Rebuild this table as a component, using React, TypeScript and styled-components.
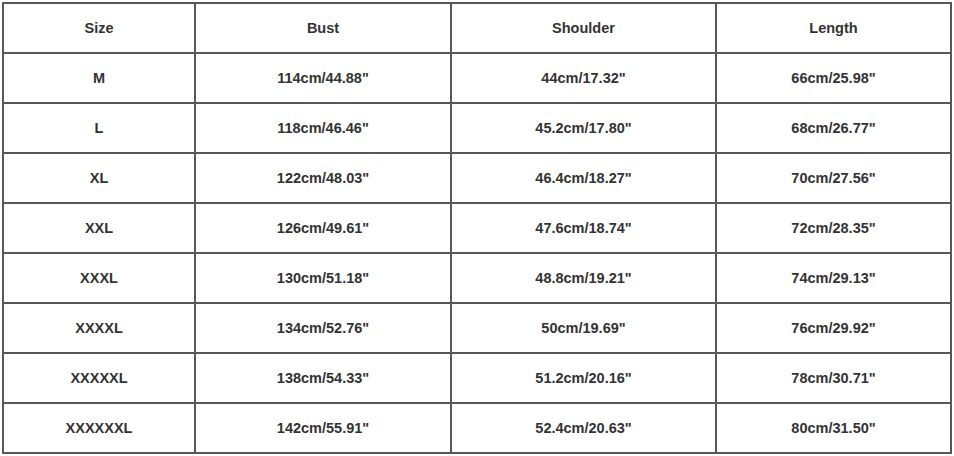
import React from 'react';
import styled, {createGlobalStyle} from 'styled-components';

const GlobalStyle = createGlobalStyle`
  html, body {
    margin: 0;
    padding: 0;
    background: #ffffff;
  }
`;

const Page = styled.div`
  padding: 2px 2px 0 2px;
  width: 954px;
  height: 456px;
  box-sizing: border-box;
`;

const SizeTable = styled.table`
  border-collapse: collapse;
  width: 950px;
  table-layout: fixed;
  font-family: 'Liberation Sans', Arial, sans-serif;
  font-size: 14.5px;
  font-weight: bold;
  color: #333333;
`;

const Cell = styled.td<{$width?: number}>`
  border: 2px solid #585858;
  height: 48px;
  padding: 0;
  text-align: center;
  vertical-align: middle;
  ${p => (p.$width ? `width: ${p.$width}px;` : '')}
`;

const HeadCell = styled(Cell).attrs({as: 'th'})`
  font-weight: bold;
`;

const columns = [
  {title: 'Size', width: 190},
  {title: 'Bust', width: 254},
  {title: 'Shoulder', width: 263},
  {title: 'Length', width: 0},
];

const rows = [
  ['M', '114cm/44.88"', '44cm/17.32"', '66cm/25.98"'],
  ['L', '118cm/46.46"', '45.2cm/17.80"', '68cm/26.77"'],
  ['XL', '122cm/48.03"', '46.4cm/18.27"', '70cm/27.56"'],
  ['XXL', '126cm/49.61"', '47.6cm/18.74"', '72cm/28.35"'],
  ['XXXL', '130cm/51.18"', '48.8cm/19.21"', '74cm/29.13"'],
  ['XXXXL', '134cm/52.76"', '50cm/19.69"', '76cm/29.92"'],
  ['XXXXXL', '138cm/54.33"', '51.2cm/20.16"', '78cm/30.71"'],
  ['XXXXXXL', '142cm/55.91"', '52.4cm/20.63"', '80cm/31.50"'],
];

function App() {
  return (
    <Page>
      <GlobalStyle />
      <SizeTable>
        <thead>
          <tr>
            {columns.map(col => (
              <HeadCell key={col.title} $width={col.width}>
                {col.title}
              </HeadCell>
            ))}
          </tr>
        </thead>
        <tbody>
          {rows.map(row => (
            <tr key={row[0]}>
              {row.map((value, i) => (
                <Cell key={i}>{value}</Cell>
              ))}
            </tr>
          ))}
        </tbody>
      </SizeTable>
    </Page>
  );
}

export default App;
